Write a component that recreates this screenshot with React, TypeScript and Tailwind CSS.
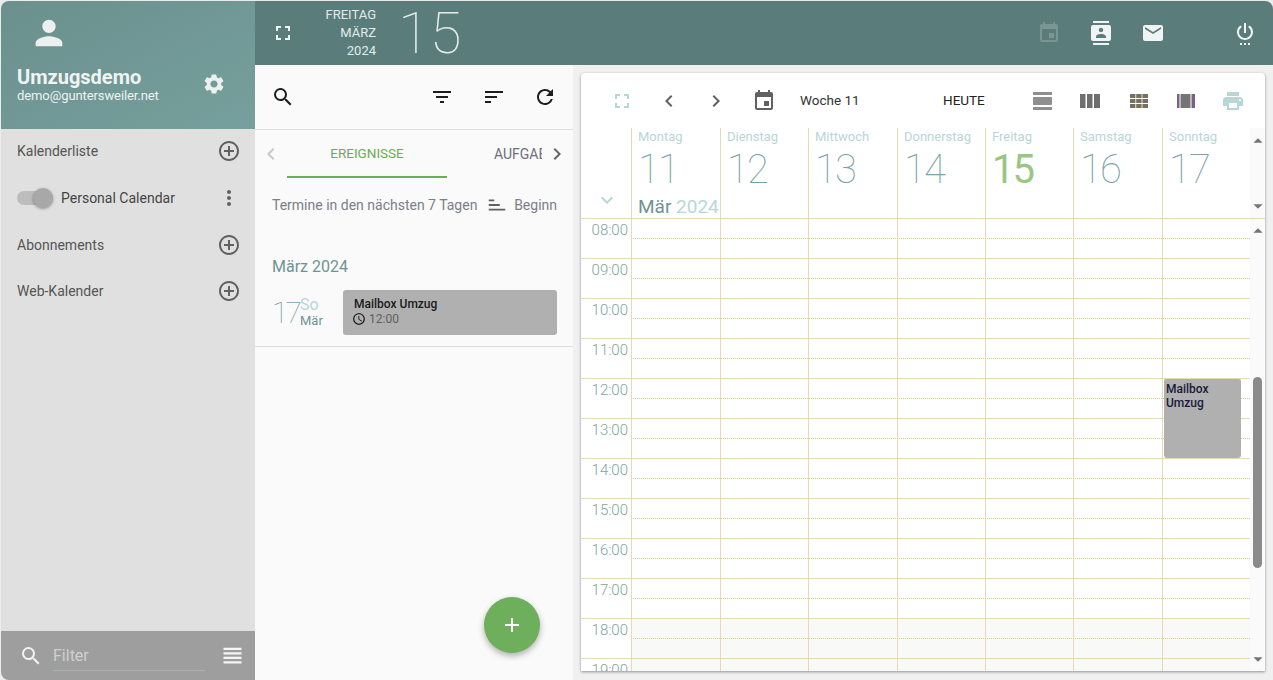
import React from "react";
import {
  MdPerson, MdSettings, MdFullscreen, MdEvent, MdContacts, MdEmail, MdSettingsPower, MdSearch, MdFilterList, MdSort, MdRefresh,
  MdChevronLeft, MdChevronRight, MdAddCircleOutline, MdMoreVert, MdAccessTime, MdKeyboardArrowDown, MdViewHeadline, MdAdd,
  MdViewDay, MdPrint, MdArrowDropUp, MdArrowDropDown,
} from "react-icons/md";

const days = [
  ["Montag", "11"], ["Dienstag", "12"], ["Mittwoch", "13"], ["Donnerstag", "14"], ["Freitag", "15"], ["Samstag", "16"], ["Sonntag", "17"],
];
const hours = ["08:00", "09:00", "10:00", "11:00", "12:00", "13:00", "14:00", "15:00", "16:00", "17:00", "18:00", "19:00"];

function SideRow({ label }: { label: string }) {
  return (
    <div className="h-[46px] flex items-center justify-between pl-[16px] pr-[14px] text-[14px] text-[#555]">
      <span>{label}</span>
      <MdAddCircleOutline className="text-[24px] text-[#616161]" />
    </div>
  );
}

function WeekIcon() {
  return (
    <svg width="20" height="14" viewBox="0 0 20 14" fill="#6e6e6e">
      <rect x="0" y="0" width="5.5" height="14" /><rect x="7" y="0" width="5.5" height="14" /><rect x="14" y="0" width="6" height="14" />
    </svg>
  );
}

function MonthIcon() {
  return (
    <svg width="18" height="14" viewBox="0 0 18 14" fill="#77705f">
      <rect x="0" y="0" width="5.4" height="4" /><rect x="6.2" y="0" width="5.4" height="4" /><rect x="12.4" y="0" width="5.6" height="4" />
      <rect x="0" y="5" width="5.4" height="4" /><rect x="6.2" y="5" width="5.4" height="4" /><rect x="12.4" y="5" width="5.6" height="4" />
      <rect x="0" y="10" width="5.4" height="4" /><rect x="6.2" y="10" width="5.4" height="4" /><rect x="12.4" y="10" width="5.6" height="4" />
    </svg>
  );
}

function ListIcon() {
  return (
    <svg width="18" height="14" viewBox="0 0 18 14">
      <rect x="0" y="0" width="2.5" height="14" fill="#7b5f85" />
      <rect x="3.5" y="0" width="10" height="14" fill="#757575" />
      <rect x="14.5" y="0" width="3.5" height="14" fill="#7b5f85" />
    </svg>
  );
}

export default function App() {
  return (
    <div className="w-[1273px] h-[680px] flex overflow-hidden bg-[#ececec] font-['Roboto',sans-serif] p-px pr-0 pb-0">
      {/* Sidebar */}
      <aside className="w-[254px] shrink-0 flex flex-col bg-[#e0e0e0] rounded-tl-lg rounded-bl-lg overflow-hidden">
        <div className="h-[128px] shrink-0 bg-gradient-to-br from-[#6b908e] to-[#76a09d] pl-4 pr-4 flex flex-col">
          <MdPerson className="text-[40px] text-[#ecf1f0] mt-[12px] ml-[12px]" />
          <div className="mt-[12px] flex items-center justify-between pr-[13px]">
            <div>
              <div className="text-[20px] leading-[24px] font-bold text-[#f0f4f3]">Umzugsdemo</div>
              <div className="text-[13px] leading-[14px] tracking-[-0.1px] text-[#eef2f1]">demo@guntersweiler.net</div>
            </div>
            <MdSettings className="text-[24px] text-[#ecf1f0]" />
          </div>
        </div>
        <div className="flex-1 -mt-px">
          <SideRow label="Kalenderliste" />
          <div className="h-[48px] flex items-center pl-[16px] pr-[14px] text-[14px] text-[#444]">
            <div className="relative w-[36px] h-[14px] rounded-full bg-[#bdbdbd] mr-[8px]">
              <span className="absolute right-0 -top-[3px] w-5 h-5 rounded-full bg-[#a8a8a8] shadow-[0_1px_3px_rgba(0,0,0,0.35)]" />
            </div>
            <span>Personal Calendar</span>
            <MdMoreVert className="ml-auto text-[24px] text-[#616161]" />
          </div>
          <SideRow label="Abonnements" />
          <SideRow label="Web-Kalender" />
        </div>
        <div className="h-[49px] shrink-0 bg-[#9e9e9e] flex items-center pl-[18px] pr-[9px]">
          <MdSearch className="text-[24px] text-[#f2f2f2]" />
          <div className="ml-[10px] w-[152px] h-[30px] mt-px border-b border-[#b0b0b0] text-[16px] leading-[30px] text-[#d0d0d0]">Filter</div>
          <MdViewHeadline className="ml-auto text-[27px] text-[#f5f5f5]" />
        </div>
      </aside>

      <div className="flex-1 flex flex-col min-w-0">
        {/* Top bar */}
        <header className="h-[64px] shrink-0 bg-[#5a7d7c] rounded-tr-lg flex items-center text-[#eef2f1]">
          <MdFullscreen className="text-[24px] ml-[16px]" />
          <div className="ml-[16px] w-[65px] text-right text-[13px] leading-[18px] text-[#e3eaea]">
            <div>FREITAG</div>
            <div>MÄRZ</div>
            <div>2024</div>
          </div>
          <div className="ml-[22px] text-[58px] leading-[64px] font-thin text-[#e3eaea]">15</div>
          <div className="ml-auto flex items-center">
            <MdEvent className="text-[24px] text-[#7b9594]" />
            <MdContacts className="ml-[28px] text-[24px] text-[#f1f4f4]" />
            <MdEmail className="ml-[28px] text-[24px] text-[#f1f4f4]" />
            <MdSettingsPower className="ml-[68px] mr-[16px] text-[24px] text-[#f1f4f4]" />
          </div>
        </header>

        <div className="flex-1 flex min-h-0">
          {/* Middle panel */}
          <section className="w-[318px] shrink-0 bg-[#fafafa] flex flex-col relative">
            <div className="h-[65px] shrink-0 border-b border-[#dedede] flex items-center pl-[16px] pr-[16px] text-[#1d1d1d]">
              <MdSearch className="text-[24px]" />
              <MdFilterList className="ml-auto text-[24px]" />
              <MdSort className="ml-[28px] text-[24px]" />
              <MdRefresh className="ml-[27px] text-[24px]" />
            </div>
            <div className="h-[48px] flex items-center relative shrink-0">
              <MdChevronLeft className="absolute left-[4px] text-[24px] text-[#c8c8c8]" />
              <div className="ml-[32px] w-[160px] h-[48px] border-b-2 border-[#6aad54] flex items-center justify-center text-[13.5px] text-[#6aad54]">EREIGNISSE</div>
              <div className="ml-[47px] w-[48px] overflow-hidden whitespace-nowrap text-[14px] text-[#6f6f7a]">AUFGABEN</div>
              <MdChevronRight className="absolute right-[4px] text-[24px] text-[#666]" />
            </div>
            <div className="h-[54px] flex items-center pl-[17px] pr-[16px] text-[14px] text-[#7a7f88] shrink-0">
              <span>Termine in den nächsten 7 Tagen</span>
              <MdSort className="ml-auto mr-[6px] text-[22px] text-[#616161] -scale-y-100" />
              <span>Beginn</span>
            </div>
            <div className="pl-[17px] mt-[23px] text-[16px] leading-[24px] text-[#6f9492]">März 2024</div>
            <div className="mt-[11px] pl-[17px] pr-[16px] pb-[11px] border-b border-[#dedede] flex items-center">
              <div className="w-[28px] text-[30px] leading-[40px] font-thin tracking-[-3px] text-[#7ba2a8]">17</div>
              <div className="w-[43px]">
                <div className="text-[16px] leading-[16px] text-[#b9d6d6]">So</div>
                <div className="text-[13px] leading-[16px] text-[#6f9492]">Mär</div>
              </div>
              <div className="flex-1 h-[45px] bg-[#b0b0b0] rounded-[3px] pl-[11px] pt-[6px]">
                <div className="text-[12px] leading-[16px] font-medium text-[#1a1a1a]">Mailbox Umzug</div>
                <div className="flex items-center text-[12px] leading-[14px] text-[#5f5f5f]">
                  <MdAccessTime className="text-[14px] text-[#111] -ml-[2px] mr-[3px]" />12:00
                </div>
              </div>
            </div>
            <button className="absolute left-[229px] bottom-[27px] w-[56px] h-[56px] rounded-full bg-[#6daf5a] shadow-[0_3px_6px_rgba(0,0,0,0.3)] flex items-center justify-center text-white">
              <MdAdd className="text-[24px]" />
            </button>
          </section>

          {/* Calendar card */}
          <section className="flex-1 min-w-0 pl-[8px] pr-[8px] pt-[8px] pb-[9px] bg-[#f0f0f0] flex">
            <div className="flex-1 min-w-0 bg-white rounded-t-[4px] shadow-[0_1px_3px_rgba(0,0,0,0.4)] flex flex-col overflow-hidden">
              <div className="h-[55px] shrink-0 flex items-center pl-[29px] text-[#616161]">
                <MdFullscreen className="text-[24px] text-[#b9d6d6]" />
                <MdChevronLeft className="ml-[23px] text-[24px] text-[#616161]" />
                <MdChevronRight className="ml-[23px] text-[24px] text-[#616161]" />
                <MdEvent className="ml-[24px] text-[24px] text-[#616161]" />
                <span className="ml-[24px] w-[57px] whitespace-nowrap text-[13.5px] text-[#333]">Woche 11</span>
                <span className="ml-[86px] w-[42px] whitespace-nowrap text-[13.5px] text-[#222]">HEUTE</span>
                <MdViewDay className="ml-[46px] text-[24px] text-[#8f8f8f]" />
                <span className="ml-[25px] flex"><WeekIcon /></span>
                <span className="ml-[30px] flex"><MonthIcon /></span>
                <span className="ml-[29px] flex"><ListIcon /></span>
                <MdPrint className="ml-[26px] text-[24px] text-[#b9d6d6]" />
              </div>

              {/* Day header */}
              <div className="h-[91px] shrink-0 flex border-b border-[#e6d9b8]">
                <div className="w-[50px] shrink-0 flex items-end justify-end pr-[12px] pb-[6px]">
                  <MdKeyboardArrowDown className="text-[24px] text-[#b9d6d6]" />
                </div>
                <div className="flex-1 grid grid-cols-[89px_88px_89px_88px_88px_89px_88px]">
                  {days.map(([name, num]) => (
                    <div key={name} className="border-l border-[#e6d9b8] pl-[6px] pt-[1px]">
                      <div className="text-[13px] leading-[16px] text-[#b9d6d6]">{name}</div>
                      <div className={num === "15" ? "text-[40px] leading-[50px] tracking-[-2px] font-normal text-[#9ac684]" : "text-[40px] leading-[50px] tracking-[-2px] font-thin text-[#7ba2a8]"}>{num}</div>
                      {num === "11" && (
                        <div className="text-[19px] leading-[20px] whitespace-nowrap text-[#6f9492] mt-[2px]">Mär <span className="text-[#b9d6d6]">2024</span></div>
                      )}
                    </div>
                  ))}
                </div>
                <div className="w-[15px] shrink-0 bg-[#fafafa] flex flex-col items-center justify-between pt-[2px] pb-[1px] text-[#757575]">
                  <MdArrowDropUp className="text-[22px]" />
                  <MdArrowDropDown className="text-[22px]" />
                </div>
              </div>

              {/* Time grid */}
              <div className="flex-1 min-h-0 flex overflow-hidden">
                <div className="w-[50px] shrink-0">
                  {hours.map((h) => (
                    <div key={h} className="h-[40px] border-b border-[#e6d9b8] text-right pr-[3px] text-[15px] leading-[22px] font-light text-[#7fa3a1]">{h}</div>
                  ))}
                </div>
                <div className="flex-1 relative">
                  {hours.map((h, i) => (
                    <div key={h} className={i >= 10 ? "h-[40px] border-b border-[#e6d9b8] bg-[#f9f9f7]" : "h-[40px] border-b border-[#e6d9b8]"}>
                      <div className="h-[20px] border-b border-dotted border-[#dcc992]" />
                    </div>
                  ))}
                  <div className="absolute inset-0 grid grid-cols-[89px_88px_89px_88px_88px_89px_88px]">
                    {days.map(([name]) => <div key={name} className="border-l border-[#e6d9b8]" />)}
                  </div>
                  <div className="absolute left-[533px] top-[159px] w-[77px] h-[80px] rounded-[3px] bg-[#b0b0b0] border-t border-[#e6d9b8] pl-[2px] pt-[3px] text-[12px] leading-[14px] font-medium text-[#1a1a3a]">Mailbox<br />Umzug</div>
                </div>
                <div className="w-[15px] shrink-0 bg-[#fafafa] relative flex flex-col items-center justify-between pb-[1px] text-[#757575]">
                  <MdArrowDropUp className="text-[22px] mt-px" />
                  <div className="absolute left-[3px] top-[158px] w-[9px] h-[191px] rounded-full bg-[#8a8a8a]" />
                  <MdArrowDropDown className="text-[22px]" />
                </div>
              </div>
            </div>
          </section>
        </div>
      </div>
    </div>
  );
}
